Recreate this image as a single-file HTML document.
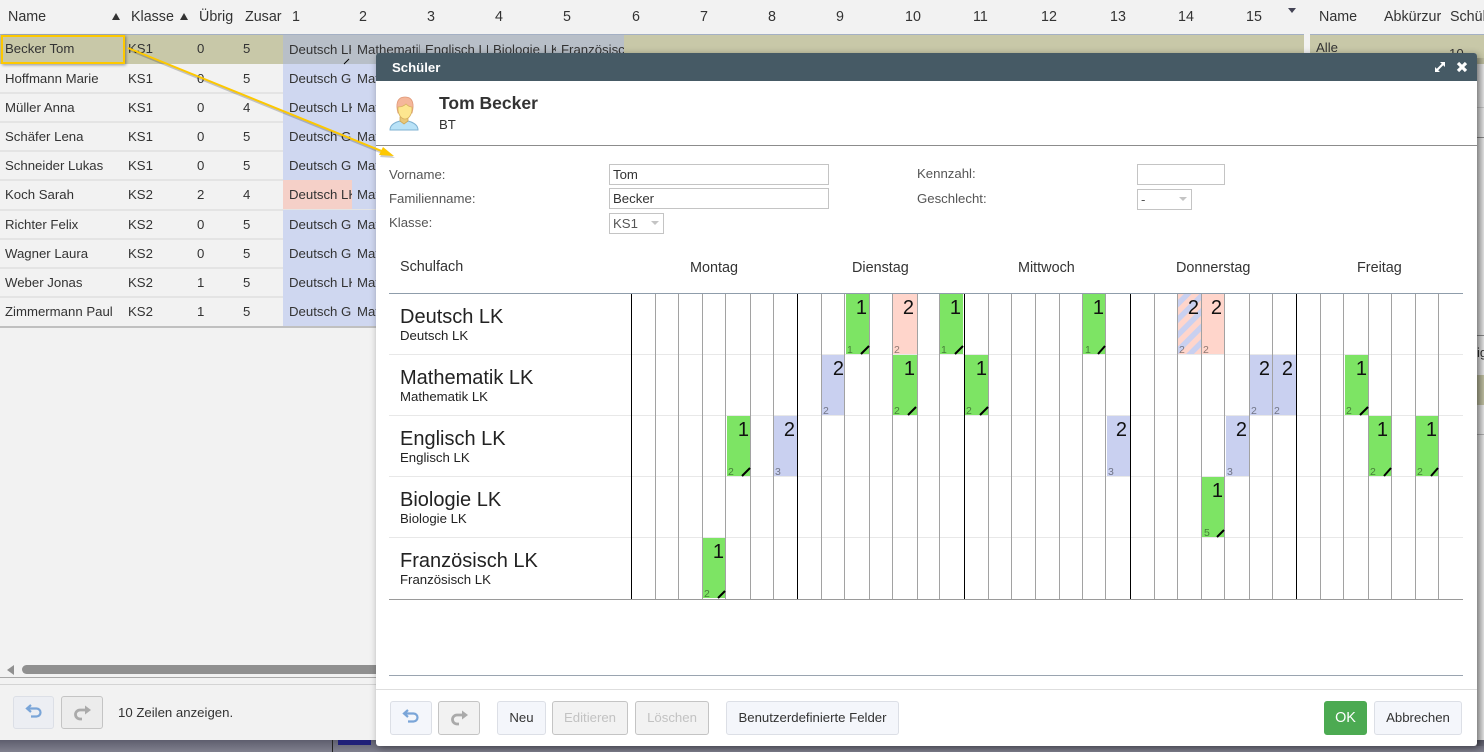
<!DOCTYPE html>
<html lang="de"><head><meta charset="utf-8"><title>Schüler</title>
<style>
html,body{margin:0;padding:0;width:1484px;height:752px;overflow:hidden;background:#f2f2f2;font-family:"Liberation Sans",sans-serif;color:#333}
.t{position:absolute;white-space:nowrap;line-height:18px;font-size:13.2px;color:#333}
.h{position:absolute;white-space:nowrap;line-height:18px;font-size:14.3px;color:#333;top:8px}
.b{position:absolute;box-sizing:border-box}
.c{position:absolute;box-sizing:border-box;height:29px;overflow:hidden;white-space:nowrap;font-size:13.2px;line-height:29px;padding-left:6px;color:#333}
.ln{position:absolute;left:0;width:1304px;height:2px;background:#e4e4e4}
.btn{position:absolute;box-sizing:border-box;top:701px;height:34px;border:1px solid #dcdfe6;border-radius:3px;background:#f4f6fb;font-size:13.2px;line-height:32px;text-align:center;color:#333}
.dis{background:#f2f2f2;border-color:#c4c4c4;color:#c2c2c2}
.inp{position:absolute;box-sizing:border-box;border:1px solid #c4c4c4;height:21px;background:#fff;font-size:13.2px;line-height:20px;padding-left:3px;color:#333}
.caret{position:absolute;right:4px;top:7px;width:0;height:0;border-left:4px solid transparent;border-right:4px solid transparent;border-top:4px solid #c4c4c4}
.sort{position:absolute;top:13px;width:0;height:0;border-left:4.5px solid transparent;border-right:4.5px solid transparent;border-bottom:7px solid #333}
</style></head><body>

<!-- bottom strip -->
<div class="b" style="left:0;top:740px;width:1484px;height:12px;background:linear-gradient(#5e5e6e,#80808e)"></div>
<div class="b" style="left:332px;top:740px;width:1px;height:12px;background:#222"></div>
<div class="b" style="left:338px;top:740px;width:33px;height:5px;background:#1f1f78"></div>
<div class="b" style="left:0;top:0;width:1484px;height:740px;background:#f2f2f2"></div>

<!-- header -->
<span class="h" style="left:8px">Name</span>
<i class="sort" style="left:112px"></i>
<span class="h" style="left:131px">Klasse</span>
<i class="sort" style="left:180px"></i>
<span class="h" style="left:199px">Übrig</span>
<span class="h" style="left:245px;width:37px;overflow:hidden">Zusar</span>
<span class="h" style="left:292px">1</span><span class="h" style="left:359px">2</span><span class="h" style="left:427px">3</span><span class="h" style="left:495px">4</span><span class="h" style="left:563px">5</span><span class="h" style="left:632px">6</span><span class="h" style="left:700px">7</span><span class="h" style="left:768px">8</span><span class="h" style="left:836px">9</span><span class="h" style="left:905px">10</span><span class="h" style="left:973px">11</span><span class="h" style="left:1041px">12</span><span class="h" style="left:1110px">13</span><span class="h" style="left:1178px">14</span><span class="h" style="left:1246px">15</span>
<div class="b" style="left:1288px;top:8px;width:0;height:0;border-left:4px solid transparent;border-right:4px solid transparent;border-top:5px solid #445"></div>
<span class="h" style="left:1319px">Name</span>
<span class="h" style="left:1384px;width:57px;overflow:hidden">Abkürzur</span>
<span class="h" style="left:1450px">Schül</span>
<div class="b" style="left:0;top:34px;width:1304px;height:1px;background:#a4b0c4"></div>
<div class="b" style="left:1310px;top:34px;width:174px;height:1px;background:#a4b0c4"></div>

<!-- selected row -->
<div class="b" style="left:0;top:35px;width:1304px;height:29px;background:#c8c8a8"></div>
<div class="b" style="left:1310px;top:35px;width:174px;height:29px;background:#c8c8a8"></div>
<span class="t" style="left:1316px;top:39px">Alle</span>
<span class="t" style="left:1449px;top:45px">10</span>

<!-- row separators -->
<div class="ln" style="top:92px"></div><div class="ln" style="top:121px"></div><div class="ln" style="top:150px"></div><div class="ln" style="top:179px"></div><div class="ln" style="top:209px"></div><div class="ln" style="top:238px"></div><div class="ln" style="top:267px"></div><div class="ln" style="top:296px"></div>
<div class="b" style="left:0;top:326px;width:376px;height:2px;background:#c0c0c0"></div>

<!-- row cells: selected -->
<div class="c" style="left:283px;top:35px;width:68px;background:#b8bfc8">Deutsch LK</div>
<div class="b" style="left:351px;top:35px;width:273px;height:29px;background:#b8bfc8"></div>
<div class="c" style="left:352px;top:35px;width:68px;padding-left:5px;background:#b8bfc8">Mathematik</div>
<div class="c" style="left:420px;top:35px;width:68px;padding-left:5px;background:#b8bfc8">Englisch LK</div>
<div class="c" style="left:488px;top:35px;width:68px;padding-left:5px;background:#b8bfc8">Biologie LK</div>
<div class="c" style="left:556px;top:35px;width:68px;padding-left:5px;background:#b8bfc8">Französisch</div>

<div class="c" style="left:283px;top:64px;width:69px;background:#cfd7f0">Deutsch G</div><div class="c" style="left:352px;top:64px;width:30px;padding-left:5px;background:#cfd7f0">Mathe</div>
<div class="c" style="left:283px;top:93px;width:69px;background:#cfd7f0">Deutsch LK</div><div class="c" style="left:352px;top:93px;width:30px;padding-left:5px;background:#cfd7f0">Mathe</div>
<div class="c" style="left:283px;top:122px;width:69px;background:#cfd7f0">Deutsch G</div><div class="c" style="left:352px;top:122px;width:30px;padding-left:5px;background:#cfd7f0">Mathe</div>
<div class="c" style="left:283px;top:151px;width:69px;background:#cfd7f0">Deutsch G</div><div class="c" style="left:352px;top:151px;width:30px;padding-left:5px;background:#cfd7f0">Mathe</div>
<div class="c" style="left:283px;top:180px;width:69px;background:#f5d0c8">Deutsch LK</div><div class="c" style="left:352px;top:180px;width:30px;padding-left:5px;background:#cfd7f0">Mathe</div>
<div class="c" style="left:283px;top:210px;width:69px;background:#cfd7f0">Deutsch G</div><div class="c" style="left:352px;top:210px;width:30px;padding-left:5px;background:#cfd7f0">Mathe</div>
<div class="c" style="left:283px;top:239px;width:69px;background:#cfd7f0">Deutsch G</div><div class="c" style="left:352px;top:239px;width:30px;padding-left:5px;background:#cfd7f0">Mathe</div>
<div class="c" style="left:283px;top:268px;width:69px;background:#cfd7f0">Deutsch LK</div><div class="c" style="left:352px;top:268px;width:30px;padding-left:5px;background:#cfd7f0">Mathe</div>
<div class="c" style="left:283px;top:297px;width:69px;background:#cfd7f0">Deutsch G</div><div class="c" style="left:352px;top:297px;width:30px;padding-left:5px;background:#cfd7f0">Mathe</div>

<!-- row text -->
<span class="t" style="left:5px;top:40px">Becker Tom</span><span class="t" style="left:128px;top:40px">KS1</span><span class="t" style="left:197px;top:40px">0</span><span class="t" style="left:243px;top:40px">5</span>
<span class="t" style="left:5px;top:70px">Hoffmann Marie</span><span class="t" style="left:128px;top:70px">KS1</span><span class="t" style="left:197px;top:70px">0</span><span class="t" style="left:243px;top:70px">5</span>
<span class="t" style="left:5px;top:99px">Müller Anna</span><span class="t" style="left:128px;top:99px">KS1</span><span class="t" style="left:197px;top:99px">0</span><span class="t" style="left:243px;top:99px">4</span>
<span class="t" style="left:5px;top:128px">Schäfer Lena</span><span class="t" style="left:128px;top:128px">KS1</span><span class="t" style="left:197px;top:128px">0</span><span class="t" style="left:243px;top:128px">5</span>
<span class="t" style="left:5px;top:157px">Schneider Lukas</span><span class="t" style="left:128px;top:157px">KS1</span><span class="t" style="left:197px;top:157px">0</span><span class="t" style="left:243px;top:157px">5</span>
<span class="t" style="left:5px;top:186px">Koch Sarah</span><span class="t" style="left:128px;top:186px">KS2</span><span class="t" style="left:197px;top:186px">2</span><span class="t" style="left:243px;top:186px">4</span>
<span class="t" style="left:5px;top:216px">Richter Felix</span><span class="t" style="left:128px;top:216px">KS2</span><span class="t" style="left:197px;top:216px">0</span><span class="t" style="left:243px;top:216px">5</span>
<span class="t" style="left:5px;top:245px">Wagner Laura</span><span class="t" style="left:128px;top:245px">KS2</span><span class="t" style="left:197px;top:245px">0</span><span class="t" style="left:243px;top:245px">5</span>
<span class="t" style="left:5px;top:274px">Weber Jonas</span><span class="t" style="left:128px;top:274px">KS2</span><span class="t" style="left:197px;top:274px">1</span><span class="t" style="left:243px;top:274px">5</span>
<span class="t" style="left:5px;top:303px">Zimmermann Paul</span><span class="t" style="left:128px;top:303px">KS2</span><span class="t" style="left:197px;top:303px">1</span><span class="t" style="left:243px;top:303px">5</span>

<!-- selection box -->
<div class="b" style="left:1px;top:35px;width:124px;height:29px;border:2px solid #fdc800;box-shadow:1px 1px 3px rgba(0,0,0,.4)"></div>

<!-- left footer -->
<div class="b" style="left:7px;top:665px;width:0;height:0;border-top:5px solid transparent;border-bottom:5px solid transparent;border-right:7px solid #909090"></div>
<div class="b" style="left:22px;top:665px;width:360px;height:9px;background:#909090;border-radius:5px"></div>
<div class="b" style="left:0;top:677px;width:376px;height:1px;background:#a8a8a8"></div>
<div class="b" style="left:0;top:684px;width:376px;height:1px;background:#d4d4d4"></div>
<div class="btn" style="left:13px;top:696px;width:41px;height:33px;background:#eceef3"></div>
<svg class="b" style="left:25px;top:704px" width="18" height="15" viewBox="0 0 18 15"><path d="M2 4.500H11.500a4 4 0 0 1 0 8H6M6 1L2 4.500L6 8" fill="none" stroke="#7aa5d8" stroke-width="2.2"/></svg>
<div class="btn dis" style="left:61px;top:696px;width:42px;height:33px;background:#ececec"></div>
<svg class="b" style="left:73px;top:705px" width="18" height="16" viewBox="0 0 18 16"><path d="M16 5H7a4.500 4.500 0 0 0 0 9H9" fill="none" stroke="#aaa" stroke-width="2.8"/><path d="M12 0.500L18 5L12 9.500Z" fill="#aaa"/></svg>
<span class="t" style="left:118px;top:704px">10 Zeilen anzeigen.</span>

<!-- right edge background details -->
<div class="b" style="left:1477px;top:64px;width:7px;height:676px;background:#f2f2f2"></div>
<div class="b" style="left:1477px;top:107px;width:7px;height:1px;background:#d0d0d0"></div>
<div class="b" style="left:1477px;top:137px;width:7px;height:1px;background:#909090"></div>
<div class="b" style="left:1477px;top:335px;width:7px;height:1px;background:#909090"></div>
<span class="t" style="left:1477px;top:344px;color:#333">ig</span>
<div class="b" style="left:1477px;top:375px;width:7px;height:30px;background:#c8c8a8"></div>
<div class="b" style="left:1477px;top:434px;width:7px;height:1px;background:#b8b8b8"></div>

<!-- dialog -->
<div class="b" style="left:376px;top:53px;width:1101px;height:693px;background:#fff;border-radius:3px;box-shadow:2px 2px 8px rgba(0,0,0,.4);overflow:hidden">
  <div class="b" style="left:0;top:0;width:1101px;height:28px;background:#465a65"></div>
</div>
<div class="b" style="left:1477px;top:58px;width:7px;height:688px;background:linear-gradient(to right,rgba(0,0,0,.22),rgba(0,0,0,.05))"></div>
<span class="t" style="left:392px;top:59px;color:#fff;font-weight:bold">Schüler</span>
<svg class="b" style="left:1434px;top:61px" width="12" height="12" viewBox="0 0 12 12"><path d="M2.500 9.500L9.500 2.500" stroke="#fff" stroke-width="2"/><path d="M6 1H11V6ZM1 6V11H6Z" fill="#fff"/></svg>
<svg class="b" style="left:1456px;top:61px" width="12" height="12" viewBox="0 0 12 12"><path d="M2 2L10 10M10 2L2 10" stroke="#fff" stroke-width="3.200"/></svg>

<!-- avatar -->
<svg class="b" style="left:388px;top:96px" width="32" height="36" viewBox="0 0 32 36">
<path d="M2 34C2 28 8 26 12 25L16 27L20 25C24 26 30 28 30 34Z" fill="#b9e2f7" stroke="#7fb2d2" stroke-width="1"/>
<path d="M12 21h8v4l-4 3l-4-3z" fill="#e8c878" stroke="#d0a858" stroke-width=".8"/>
<path d="M10 17C8 10 8 1 17 1S26 10 24 17Z" fill="#f5b79a" stroke="#e09a7a" stroke-width=".8"/>
<path d="M10 11C13 11 16 10 18 8C20 10 22 11 24 11C24.500 18 21 23 17 23S9.500 18 10 11Z" fill="#fde68f" stroke="#d8b060" stroke-width=".8"/>
</svg>
<span class="t" style="left:439px;top:94px;font-size:17.500px;font-weight:bold;line-height:18px;color:#333">Tom Becker</span>
<span class="t" style="left:439px;top:116px;color:#333">BT</span>
<div class="b" style="left:376px;top:145px;width:1101px;height:1px;background:#8c8c8c"></div>

<!-- form -->
<span class="t" style="left:389px;top:166px;color:#555">Vorname:</span>
<span class="t" style="left:389px;top:190px;color:#555">Familienname:</span>
<span class="t" style="left:389px;top:214px;color:#555">Klasse:</span>
<span class="t" style="left:917px;top:165px;color:#555">Kennzahl:</span>
<span class="t" style="left:917px;top:190px;color:#555">Geschlecht:</span>
<div class="inp" style="left:609px;top:164px;width:220px">Tom</div>
<div class="inp" style="left:609px;top:188px;width:220px">Becker</div>
<div class="inp" style="left:609px;top:213px;width:55px;color:#555">KS1<i class="caret"></i></div>
<div class="inp" style="left:1137px;top:164px;width:88px"></div>
<div class="inp" style="left:1137px;top:189px;width:55px;color:#555">-<i class="caret"></i></div>

<!-- timetable header -->
<span class="t" style="left:400px;top:258px;font-size:14.400px">Schulfach</span>
<span class="t" style="left:690px;top:259px;font-size:14.400px">Montag</span>
<span class="t" style="left:852px;top:259px;font-size:14.400px">Dienstag</span>
<span class="t" style="left:1018px;top:259px;font-size:14.400px">Mittwoch</span>
<span class="t" style="left:1176px;top:259px;font-size:14.400px">Donnerstag</span>
<span class="t" style="left:1357px;top:259px;font-size:14.400px">Freitag</span>

<!-- timetable -->
<svg class="b" style="left:0;top:0" width="1484" height="752" viewBox="0 0 1484 752" font-family="'Liberation Sans',sans-serif">
<defs>
<pattern id="st" width="11" height="11" patternUnits="userSpaceOnUse" patternTransform="rotate(45)"><rect width="11" height="11" fill="#ffd5cb"/><rect width="5.500" height="11" fill="#c9d0f0"/></pattern>
</defs>
<g fill="#e8e8e8">
<rect x="389" y="354" width="1074" height="1"/><rect x="389" y="415" width="1074" height="1"/><rect x="389" y="476" width="1074" height="1"/><rect x="389" y="537" width="1074" height="1"/>
</g>
<!-- blocks -->
<g fill="#7de464">
<rect x="846" y="294" width="23" height="60"/><rect x="940" y="294" width="23" height="60"/><rect x="1083" y="294" width="22" height="60"/>
<rect x="893" y="355" width="24" height="60"/><rect x="965" y="355" width="23" height="60"/><rect x="1345" y="355" width="23" height="60"/>
<rect x="727" y="416" width="23" height="60"/><rect x="1369" y="416" width="22" height="60"/><rect x="1416" y="416" width="22" height="60"/>
<rect x="1202" y="477" width="22" height="60"/><rect x="703" y="538" width="22" height="60"/>
</g>
<g fill="#ffd5cb"><rect x="893" y="294" width="24" height="60"/><rect x="1202" y="294" width="22" height="60"/></g>
<rect x="1178" y="294" width="23" height="60" fill="url(#st)"/>
<g fill="#c9d0f0">
<rect x="822" y="355" width="22" height="60"/><rect x="1250" y="355" width="22" height="60"/><rect x="1273" y="355" width="23" height="60"/>
<rect x="774" y="416" width="23" height="60"/><rect x="1107" y="416" width="23" height="60"/><rect x="1226" y="416" width="23" height="60"/>
</g>
<!-- grid lines -->
<g fill="#a2a2a2">
<rect x="655" y="294" width="1" height="305"/><rect x="678" y="294" width="1" height="305"/><rect x="702" y="294" width="1" height="305"/><rect x="725" y="294" width="1" height="305"/><rect x="750" y="294" width="1" height="305"/><rect x="773" y="294" width="1" height="305"/>
<rect x="821" y="294" width="1" height="305"/><rect x="844" y="294" width="1" height="305"/><rect x="869" y="294" width="1" height="305"/><rect x="892" y="294" width="1" height="305"/><rect x="917" y="294" width="1" height="305"/><rect x="939" y="294" width="1" height="305"/>
<rect x="988" y="294" width="1" height="305"/><rect x="1011" y="294" width="1" height="305"/><rect x="1035" y="294" width="1" height="305"/><rect x="1059" y="294" width="1" height="305"/><rect x="1082" y="294" width="1" height="305"/><rect x="1105" y="294" width="1" height="305"/>
<rect x="1154" y="294" width="1" height="305"/><rect x="1177" y="294" width="1" height="305"/><rect x="1201" y="294" width="1" height="305"/><rect x="1224" y="294" width="1" height="305"/><rect x="1249" y="294" width="1" height="305"/><rect x="1272" y="294" width="1" height="305"/>
<rect x="1320" y="294" width="1" height="305"/><rect x="1343" y="294" width="1" height="305"/><rect x="1368" y="294" width="1" height="305"/><rect x="1391" y="294" width="1" height="305"/><rect x="1415" y="294" width="1" height="305"/><rect x="1438" y="294" width="1" height="305"/>
</g>
<g fill="#000">
<rect x="631" y="294" width="1" height="305"/><rect x="797" y="294" width="1" height="305"/><rect x="964" y="294" width="1" height="305"/><rect x="1130" y="294" width="1" height="305"/><rect x="1296" y="294" width="1" height="305"/>
</g>
<rect x="389" y="293" width="1074" height="1" fill="#8f9dab"/>
<rect x="389" y="599" width="1074" height="1" fill="#9a9a9a"/>
<rect x="389" y="675" width="1074" height="1" fill="#9aa4b0"/>
<!-- big numbers -->
<g font-size="20" fill="#111" text-anchor="end">
<text x="867" y="314">1</text><text x="914" y="314">2</text><text x="961" y="314">1</text><text x="1104" y="314">1</text><text x="1199" y="314">2</text><text x="1222" y="314">2</text>
<text x="844" y="375">2</text><text x="915" y="375">1</text><text x="987" y="375">1</text><text x="1270" y="375">2</text><text x="1293" y="375">2</text><text x="1367" y="375">1</text>
<text x="749" y="436">1</text><text x="795" y="436">2</text><text x="1127" y="436">2</text><text x="1247" y="436">2</text><text x="1388" y="436">1</text><text x="1437" y="436">1</text>
<text x="1223" y="497">1</text><text x="724" y="558">1</text>
</g>
<!-- small numbers -->
<g font-size="10.500" fill="#000" fill-opacity=".45">
<text x="847" y="353">1</text><text x="894" y="353">2</text><text x="941" y="353">1</text><text x="1085" y="353">1</text><text x="1179" y="353">2</text><text x="1203" y="353">2</text>
<text x="823" y="414">2</text><text x="894" y="414">2</text><text x="966" y="414">2</text><text x="1251" y="414">2</text><text x="1274" y="414">2</text><text x="1346" y="414">2</text>
<text x="728" y="475">2</text><text x="775" y="475">3</text><text x="1108" y="475">3</text><text x="1227" y="475">3</text><text x="1370" y="475">2</text><text x="1417" y="475">2</text>
<text x="1204" y="536">5</text><text x="704" y="597">2</text>
</g>
<!-- check ticks -->
<g stroke="#000" stroke-width="2" fill="none">
<path d="M861 354L869 346"/><path d="M955 354L963 346"/><path d="M1098 354L1105 346"/>
<path d="M908 415L916 407"/><path d="M980 415L988 407"/><path d="M1360 415L1368 407"/>
<path d="M742 476L750 468"/><path d="M1384 476L1391 468"/><path d="M1431 476L1438 468"/>
<path d="M1217 537L1224 530"/><path d="M718 598L725 591"/>
<path d="M344 64L349 59" stroke-width="1"/>
</g>
</svg>

<!-- subject names -->
<span class="t" style="left:400px;top:306px;font-size:20px;line-height:22px;color:#222">Deutsch LK</span><span class="t" style="left:400px;top:327px;color:#222">Deutsch LK</span>
<span class="t" style="left:400px;top:367px;font-size:20px;line-height:22px;color:#222">Mathematik LK</span><span class="t" style="left:400px;top:388px;color:#222">Mathematik LK</span>
<span class="t" style="left:400px;top:428px;font-size:20px;line-height:22px;color:#222">Englisch LK</span><span class="t" style="left:400px;top:449px;color:#222">Englisch LK</span>
<span class="t" style="left:400px;top:489px;font-size:20px;line-height:22px;color:#222">Biologie LK</span><span class="t" style="left:400px;top:510px;color:#222">Biologie LK</span>
<span class="t" style="left:400px;top:550px;font-size:20px;line-height:22px;color:#222">Französisch LK</span><span class="t" style="left:400px;top:571px;color:#222">Französisch LK</span>

<!-- dialog footer -->
<div class="b" style="left:376px;top:689px;width:1101px;height:1px;background:#dedede"></div>
<div class="btn" style="left:390px;width:42px"></div>
<svg class="b" style="left:402px;top:709px" width="18" height="15" viewBox="0 0 18 15"><path d="M2 4.500H11.500a4 4 0 0 1 0 8H6M6 1L2 4.500L6 8" fill="none" stroke="#7aa5d8" stroke-width="2.200"/></svg>
<div class="btn dis" style="left:438px;width:42px"></div>
<svg class="b" style="left:450px;top:710px" width="18" height="16" viewBox="0 0 18 16"><path d="M16 5H7a4.500 4.500 0 0 0 0 9H9" fill="none" stroke="#aaa" stroke-width="2.800"/><path d="M12 0.500L18 5L12 9.500Z" fill="#aaa"/></svg>
<div class="btn" style="left:497px;width:49px">Neu</div>
<div class="btn dis" style="left:552px;width:76px">Editieren</div>
<div class="btn dis" style="left:635px;width:74px">Löschen</div>
<div class="btn" style="left:726px;width:173px">Benutzerdefinierte Felder</div>
<div class="btn" style="left:1324px;width:43px;background:#4caa52;border-color:#4caa52;color:#fff;font-size:14.400px">OK</div>
<div class="btn" style="left:1374px;width:88px">Abbrechen</div>

<!-- arrow -->
<svg class="b" style="left:0;top:0" width="1484" height="752" viewBox="0 0 1484 752">
<path d="M129 50L385 154" stroke="#000" stroke-opacity=".2" stroke-width="2" fill="none"/>
<path d="M395 158L380 157L384 150Z" fill="#000" fill-opacity=".2"/>
<path d="M128 48L384 152" stroke="#fdc800" stroke-width="2" fill="none"/>
<path d="M394 156L379 155L383 147Z" fill="#fdc800"/>
</svg>
</body></html>
